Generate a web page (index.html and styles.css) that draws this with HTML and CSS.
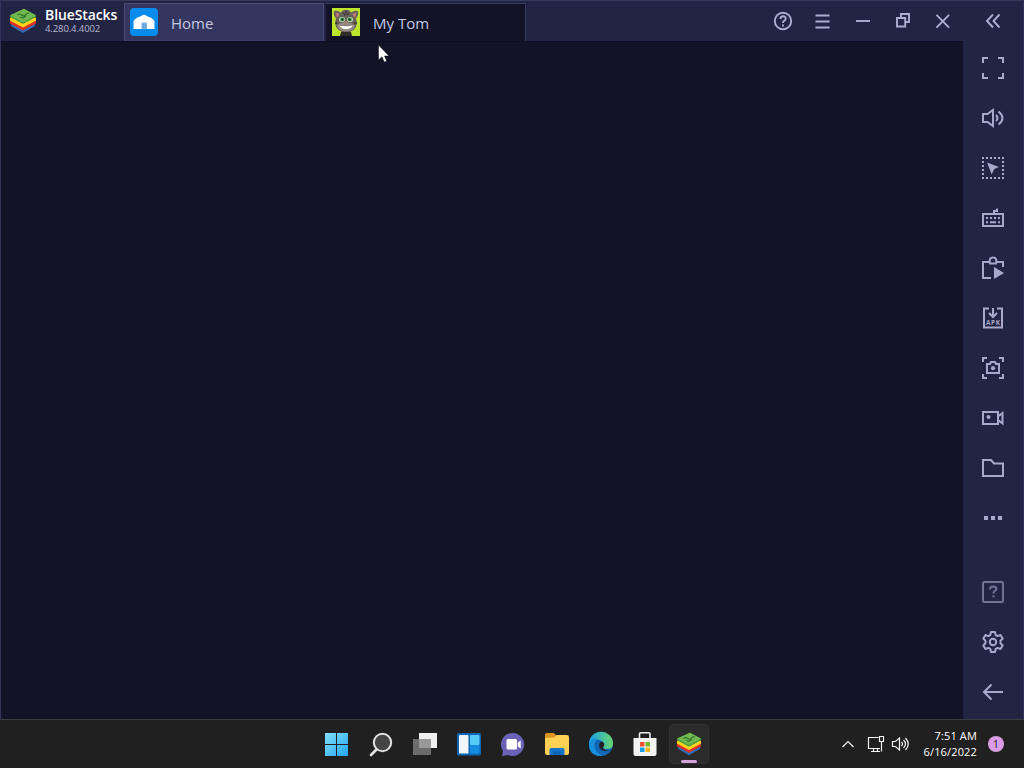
FILE: index.html
```
<!DOCTYPE html>
<html lang="en">
<head>
<meta charset="utf-8">
<title>BlueStacks</title>
<link rel="stylesheet" href="styles.css">
</head>
<body>
<svg class="defs" aria-hidden="true">
  <defs>
    <symbol id="stack" viewBox="0 0 28 26">
      <path fill="#2c6fb8" d="M2 16.500L14 10l12 6.500v1.500L14 25 2 18z"/>
      <path fill="#dd3129" d="M1 13l13-7 13 7v2.500L14 22.500 1 15.500z"/>
      <path fill="#fbd51b" d="M1 10l13-7 13 7v2.500L14 19.500 1 12.500z"/>
      <path fill="#4d9f3e" d="M1 7.500L15 1l12 6.500V9L14 16 1 9z"/>
      <path fill="#70b84f" d="M1 7.200L15 .8l12 6.400-13 7z"/>
      <path fill="none" stroke="#37752f" stroke-width="1.300" d="M8 7l3-1 2 1.500 3 .5 1-2 3-1M11 9l3 1 3-2"/>
    </symbol>
  </defs>
</svg>
<div class="desktop">
  <main class="window">
    <header class="titlebar">
      <div class="brand">
        <svg class="brand-logo" width="28" height="26"><use href="#stack"/></svg>
        <div class="brand-text"><b class="brand-name">BlueStacks</b><span class="version">4.280.4.4002</span></div>
      </div>
      <div class="tab tab-home">
        <svg class="tab-icon" width="28" height="28" viewBox="0 0 28 28"><rect width="28" height="28" rx="4" fill="#078bed"/><path fill="#fff" d="M3.500 13.500Q4.500 10.500 9 9l5-2.500L19 9q4.500 1.500 5.500 4.500V21h-21z"/><path fill="#83b7e8" d="M11.500 14.500h5.500V21h-5.500z"/><path stroke="#5598d6" d="M13.200 15.500v4.500M15.200 15.500v4.500"/></svg>
        <span class="tab-label">Home</span>
      </div>
      <div class="tab tab-game">
        <svg class="tab-icon" width="28" height="28" viewBox="0 0 28 28">
          <rect width="28" height="28" fill="#bde52b"/>
          <path fill="#302b28" d="M8 28q1-7 6-7t6 7z"/>
          <path fill="#6a615b" d="M2 3q4-1 7 1.500Q11 1 14 2q3-1 5 2.500Q22 2 26 3q1 4-2 7.500l1 4.500q-1 9-11 9T3 15l1-4.500Q1 7 2 3z"/>
          <path fill="#c67d77" d="M3.500 4.500l4 1.500-2.500 4zM24.500 4.500l-4 1.500 2.500 4z"/>
          <path fill="#2f2a28" d="M10 4l3 2v2zM13.200 3h1.600L14 8zM18 4l-3 2v2zM3.500 14l3 1-3 1zM24.500 14l-3 1 3 1z"/>
          <ellipse cx="10" cy="11.500" rx="3" ry="2.600" fill="#c4dcbc"/><ellipse cx="18" cy="11.500" rx="3" ry="2.600" fill="#c4dcbc"/>
          <circle cx="10.300" cy="11.500" r="2.100" fill="#3a9847"/><circle cx="17.700" cy="11.500" r="2.100" fill="#3a9847"/>
          <circle cx="10.300" cy="11.500" r="1.100" fill="#14251a"/><circle cx="17.700" cy="11.500" r="1.100" fill="#14251a"/>
          <path fill="#948982" d="M5 17.500q4-3.500 9-3.500t9 3.500q-1 6-9 6t-9-6z"/>
          <path fill="#ba746c" d="M12.300 13h3.400L14 15.200z"/>
          <path fill="#fff" stroke="#6b5a55" stroke-width=".5" d="M6.500 17q7.500 2 15 0-2 4.500-7.500 4.500T6.500 17z"/>
        </svg>
        <span class="tab-label">My Tom</span>
      </div>
      <nav class="controls">
        <svg class="ctl" viewBox="0 0 24 24"><circle cx="12" cy="12" r="8.200"/><path d="M9.500 10q0-2.700 2.600-2.700T14.700 9.800q0 1.200-1.500 2Q12 12.500 12 14"/><path d="M12 15.500v2"/></svg>
        <svg class="ctl" viewBox="0 0 24 24"><path d="M4.500 6.500h14M4.500 12.500h14M4.500 18.500h14"/></svg>
        <svg class="ctl" viewBox="0 0 24 24"><path d="M5 12h14"/></svg>
        <svg class="ctl" viewBox="0 0 24 24"><path d="M6 9h8.200v8.500H6zM10 9V5h8v8h-4"/></svg>
        <svg class="ctl" viewBox="0 0 24 24"><path d="M5.500 5.800l12.600 12.800M18.100 5.800L5.500 18.600"/></svg>
      </nav>
      <div class="collapse"><svg class="ctl" viewBox="0 0 24 24"><path d="M12 5.500L6 12l6 6.500M18.500 5.500l-6 6.500 6 6.500"/></svg></div>
    </header>
    <div class="body">
      <section class="stage"></section>
      <aside class="tools">
        <div class="tool"><svg viewBox="0 0 26 26"><path d="M3 8V3h5M18 3h5v5M23 18v5h-5M8 23H3v-5"/></svg></div>
        <div class="tool"><svg viewBox="0 0 26 26"><path d="M3 9h4.500L13 5v16l-5.500-4H3zM16 10q3 3 0 6M18.500 6.500q8 6.500 0 13"/></svg></div>
        <div class="tool"><svg viewBox="0 0 26 26"><path stroke-dasharray="2 2" d="M2 3h22M2 23h22M3 6v15M23 6v15"/><path class="solid" d="M7 7.500l12 4.500-4.700 2-2.600 5.500z"/></svg></div>
        <div class="tool"><svg viewBox="0 0 26 26"><path d="M3 9h20v12H3zM14 9V6h3V3.500"/><path stroke-dasharray="2 2" d="M6 13h15"/><path d="M6 17.300h2M10 17.300h6M18 17.300h2"/></svg></div>
        <div class="tool"><svg viewBox="0 0 26 26"><path d="M11 23H3V7h6M17 7h6v5M10 8.500h6q1.500-6-3-6t-3 6z"/><path class="solid" d="M14 12l10 6-10 6z"/></svg></div>
        <div class="tool"><svg viewBox="0 0 26 26"><path d="M9 3.500H4v19h18v-19h-5M13 3v8M9 8l4 4 4-4"/><text class="apk" x="13.300" y="19.700" text-anchor="middle">APK</text></svg></div>
        <div class="tool"><svg viewBox="0 0 26 26"><path d="M3 7V3h4M19 3h4v4M23 19v4h-4M7 23H3v-4M7 9h3l1-2h4l1 2h3v9H7z"/><circle class="solid" cx="13" cy="13.200" r="2.100"/></svg></div>
        <div class="tool"><svg viewBox="0 0 26 26"><path d="M3 7h15v12H3zM18 11.500l4.500-3.500v10.500L18 15"/><circle class="solid" cx="8.500" cy="12" r="2"/></svg></div>
        <div class="tool"><svg viewBox="0 0 26 26"><path d="M3 5h8l3 3.500h9V21H3z"/></svg></div>
        <div class="tool"><svg viewBox="0 0 26 26"><path class="solid" d="M4 11h4v4H4zM11 11h4v4h-4zM18 11h4v4h-4z"/></svg></div>
        <div class="tool tool-help"><svg viewBox="0 0 26 26"><rect x="3" y="3" width="20" height="20" rx="1.500"/><path stroke-width="2" d="M10 10.500q0-3 3.200-3t3.200 2.500q0 1.500-1.700 2.200-1.200.5-1.200 2.300"/><path stroke-width="2" d="M13.500 16.300v2"/></svg></div>
        <div class="tool"><svg viewBox="0 0 26 26"><path stroke-linejoin="round" d="M11 3h4l.7 3 2 1.100L20.500 6l2.200 3.500-2.200 2.200v2.600l2.200 2.200-2.200 3.500-2.800-1.100-2 1.100-.7 3h-4l-.7-3-2-1.100L5.500 20l-2.200-3.500 2.200-2.200v-2.600L3.300 9.500 5.500 6l2.800 1.100 2-1.100z"/><circle cx="13" cy="13" r="3.200"/></svg></div>
        <div class="tool"><svg viewBox="0 0 26 26"><path d="M23 13H4.500M11.500 5.500L4 13l7.500 7.500"/></svg></div>
      </aside>
    </div>
  </main>
  <footer class="taskbar">
    <div class="apps">
      <div class="app"><svg viewBox="0 0 26 26"><defs><linearGradient id="win" gradientUnits="userSpaceOnUse" x1="1" y1="2" x2="24" y2="25"><stop stop-color="#83dffb"/><stop offset="1" stop-color="#22a6f0"/></linearGradient></defs><path fill="url(#win)" d="M1 2h11v11H1zM13 2h11v11H13zM1 14h11v11H1zM13 14h11v11H13z"/></svg></div>
      <div class="app"><svg viewBox="0 0 26 26"><path d="M8.500 18.500L3 24" stroke="#e2e2e2" stroke-width="2.800" stroke-linecap="round"/><circle cx="14.500" cy="11.500" r="8.700" fill="#444" stroke="#e2e2e2" stroke-width="2"/></svg></div>
      <div class="app"><svg viewBox="0 0 26 26"><path fill="#f0f0f0" d="M7 2h18v15H7z"/><path fill="#6c6c6c" d="M1 8h18v16H1z"/><path fill="#999" d="M7 8h12v9H7z"/></svg></div>
      <div class="app"><svg viewBox="0 0 26 26"><rect x="1" y="2" width="24" height="22.500" rx="1.500" fill="#0c66b4"/><rect x="3" y="4" width="9.500" height="18.500" rx="1" fill="#f2f6fb"/><rect x="14" y="4" width="9.500" height="10" rx="1" fill="#57caf6"/><rect x="14" y="14" width="9.500" height="8.500" rx="1" fill="#188ddf"/></svg></div>
      <div class="app"><svg viewBox="0 0 26 26"><path fill="#6b62b8" d="M13 2a11.500 11.500 0 1 1-5 22l-6 1 1-5A11.500 11.500 0 0 1 13 2z"/><path fill="#fff" d="M8 8h7.500q1.500 0 1.500 1.500V17q0 1.500-1.500 1.500H8q-1.500 0-1.500-1.500V9.500Q6.500 8 8 8zM17.800 11.500l2.900-2v8l-2.900-2z"/></svg></div>
      <div class="app"><svg viewBox="0 0 26 26"><path fill="#dc961e" d="M1 4q0-2 2-2h7l2 2.500v5H1z"/><path fill="#fcd052" d="M1 7l9-.5L12.500 4H23q2 0 2 2V22q0 2-2 2H3q-2 0-2-2z"/><path fill="#1474c9" d="M7 17h12q1.500 0 1.500 1.500V24h-15v-5.500Q5.500 17 7 17z"/><path fill="#0c66b4" d="M9 20.500h8V24H9z"/></svg></div>
      <div class="app"><svg viewBox="0 0 26 26"><defs><linearGradient id="edge"><stop stop-color="#1b9dea"/><stop offset="1" stop-color="#67d86c"/></linearGradient></defs><circle cx="13" cy="13" r="12" fill="#1266b5"/><path fill="url(#edge)" d="M1 13A12 12 0 0 1 25 12.500Q25 18 19 18q-4 0-4-2 2-2 0-5-5-6-14 2z"/><path fill="#168fdd" d="M1 13q2-7 9-5-5 3-3 9 2 6 8 8Q1 26 1 13z"/><path fill="#202226" d="M15 11q-3-1-4 3 0 6 8 6 3 0 5-1-5 2-8-1-2-1 0-3 1-2-1-4z"/></svg></div>
      <div class="app"><svg viewBox="0 0 26 26"><path fill="none" stroke="#eee" stroke-width="1.600" d="M7.500 8V3q0-1.300 1.300-1.300h7.900Q18 1.700 18 3v5"/><path fill="#f3f3f3" d="M1.500 7h23v16q0 2-2 2h-19q-2 0-2-2z"/><path fill="#ef5130" d="M8 11h4.500v4.500H8z"/><path fill="#78b52b" d="M13.500 11H18v4.500h-4.500z"/><path fill="#169ee6" d="M8 16.500h4.500V21H8z"/><path fill="#f4b61a" d="M13.500 16.500H18V21h-4.500z"/></svg></div>
      <div class="app app-active"><svg viewBox="0 0 28 26"><use href="#stack"/></svg></div>
    </div>
    <div class="tray">
      <svg class="chevron" viewBox="0 0 14 10"><path d="M1.500 8L7 2.500 12.500 8"/></svg>
      <svg class="network" viewBox="0 0 18 18"><path d="M11.500 2.500h-10v11h11.500M4 16.500h9M6.500 14v2.500M10.500 14v2.500M12.500 1.500h4v5h-4zM14.500 6.500v10"/></svg>
      <svg class="speaker" viewBox="0 0 18 18"><path d="M1.500 6.500h3L8.500 3v12l-4-3.500h-3zM10.500 7q2 2 0 4M12.500 5q4 4 0 8M14.500 3q5.500 6 0 12"/></svg>
      <div class="clock"><span class="time">7:51 AM</span><span class="date">6/16/2022</span></div>
      <span class="badge">1</span>
    </div>
  </footer>
</div>
<svg class="cursor" width="14" height="20" viewBox="0 0 14 20"><path fill="#fff" stroke="#111" stroke-width=".5" d="M1.500 1v15l3.500-3.200L7.200 18l2.500-1-2.200-5H12z"/></svg>
</body>
</html>
```
FILE: styles.css
```
* { box-sizing: border-box; }
body { margin: 0; font-family: "Open Sans", "Noto Sans", sans-serif; overflow: hidden; background: #202020; }
.defs { position: absolute; width: 0; height: 0; }
svg { display: block; flex: none; }
.desktop { width: 1024px; height: 768px; display: flex; flex-direction: column; }
.window { height: 719px; display: flex; flex-direction: column; background: #222444; border-left: 1px solid #30345b; border-right: 1px solid #30345b; }
.titlebar { height: 41px; flex: none; display: flex; border-top: 1px solid #343a5e; }
.brand { width: 123px; display: flex; align-items: flex-start; padding: 6px 0 0 8px; gap: 8px; }
.brand-logo { margin-top: 1px; }
.brand-text { display: flex; flex-direction: column; white-space: nowrap; }
.brand-name { color: #fff; font-size: 14px; line-height: 15px; font-weight: 600; letter-spacing: -.1px; }
.version { color: #b7b7cf; font-size: 9.500px; line-height: 13px; letter-spacing: -.1px; }
.tab { height: 38px; margin-top: 2px; display: flex; align-items: center; gap: 13px; color: #c5c7e3; font-size: 15px; letter-spacing: 0; }
.tab-home { width: 200px; padding-left: 5px; background: #34365f; border: 1px solid #484b76; border-bottom-color: #3b3e68; }
.tab-game { width: 200px; margin-left: 2px; padding: 0 0 1px 6px; background: #121327; border-top: 1px solid #353861; border-right: 1px solid #353861; }
.tab-label { line-height: 20px; padding-top: 2px; }
.tab-game .tab-label { padding-top: 1px; }
.controls { display: flex; gap: 16px; margin-left: auto; padding: 8px 7px 0 0; }
.collapse { width: 61px; padding: 8px 0 0 19px; }
.ctl { width: 24px; height: 24px; fill: none; stroke: #acadd0; stroke-width: 1.900; }
.body { flex: 1; min-height: 0; display: flex; }
.stage { flex: 1; background: #121327; border-top: 1px solid #0d0e22; }
.tools { width: 60px; padding-top: 2px; display: flex; flex-direction: column; }
.tool { height: 50px; display: flex; justify-content: center; align-items: center; }
.tool svg { width: 26px; height: 26px; fill: none; stroke: #a8a8ca; stroke-width: 2; }
.tool .solid { fill: #a8a8ca; stroke: none; }
.tool .apk { fill: #a8a8ca; stroke: none; font-size: 6.500px; font-weight: 700; letter-spacing: .6px; }
.tool-help { margin-top: 24px; opacity: .6; }
.taskbar { height: 49px; display: flex; background: #202020; border-top: 1px solid #3c3c46; }
.apps { display: flex; gap: 4px; margin-left: 317px; padding-top: 4px; }
.app { width: 40px; height: 40px; display: flex; align-items: center; justify-content: center; }
.app svg { width: 26px; height: 26px; }
.app-active { background: #2b2b2b; border: 1px solid #313131; border-radius: 4px; flex-direction: column; position: relative; }
.app-active::after { content: ""; position: absolute; bottom: 0; width: 16px; height: 3px; border-radius: 2px; background: #d3a3da; }
.tray { margin-left: auto; display: flex; align-items: center; padding-right: 20px; }
.tray svg { fill: none; stroke: #f1f1f1; stroke-width: 1.200; }
.chevron { width: 14px; height: 10px; margin-right: 12px; }
.network { width: 18px; height: 18px; margin-right: 6px; }
.speaker { width: 18px; height: 18px; }
.clock { width: 68px; display: flex; flex-direction: column; align-items: flex-end; color: #fff; font-size: 11px; line-height: 16px; letter-spacing: .15px; }
.badge { width: 16px; height: 16px; border-radius: 50%; margin-left: 11px; background: #d99de4; color: #302034; font-size: 11px; line-height: 16px; text-align: center; }
.cursor { position: absolute; left: 377px; top: 44px; }
```
